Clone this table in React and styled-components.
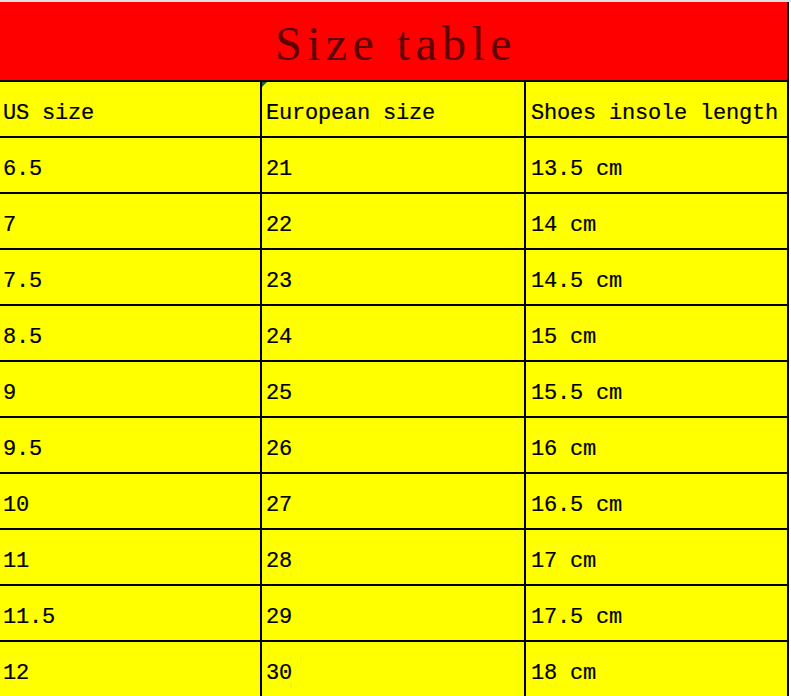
import React from "react"
import styled, { createGlobalStyle } from "styled-components"

const rows = [
  ["6.5", "21", "13.5 cm"],
  ["7", "22", "14 cm"],
  ["7.5", "23", "14.5 cm"],
  ["8.5", "24", "15 cm"],
  ["9", "25", "15.5 cm"],
  ["9.5", "26", "16 cm"],
  ["10", "27", "16.5 cm"],
  ["11", "28", "17 cm"],
  ["11.5", "29", "17.5 cm"],
  ["12", "30", "18 cm"],
]

const GlobalStyle = createGlobalStyle`
  html, body {
    margin: 0;
    padding: 0;
    background: #fff;
    overflow: hidden;
  }
`

const Page = styled.div`
  width: 791px;
  height: 696px;
  overflow: hidden;
  background: #fff;
  border-top: 2px solid #e2e2e2;
  box-sizing: border-box;
`

const Sheet = styled.div`
  width: 789px;
  display: grid;
  grid-template-columns: 260px 262px 261px;
  grid-template-rows: 78px repeat(11, 54px);
  gap: 2px;
  background: #000;
  padding-right: 2px;
  box-sizing: border-box;
`

const Title = styled.div`
  grid-column: 1 / -1;
  background: #ff0000;
  color: #5c0000;
  display: flex;
  align-items: center;
  justify-content: center;
  padding: 4px 0 0 5px;
  box-sizing: border-box;
  font-family: "Liberation Serif", "Times New Roman", serif;
  font-size: 48px;
  letter-spacing: 5.4px;
  white-space: nowrap;
`

const Cell = styled.div`
  position: relative;
  background: #ffff00;
  color: #000;
  display: flex;
  align-items: center;
  padding: 9px 0 0 ${p => p.$pad}px;
  box-sizing: border-box;
  font-family: "Liberation Mono", "Courier New", monospace;
  font-size: 22px;
  letter-spacing: -0.2px;
  -webkit-text-stroke: 0.2px #000;
  white-space: nowrap;
`

const CommentMark = styled.span`
  position: absolute;
  top: 0;
  left: 0;
  width: 0;
  height: 0;
  border-top: 5px solid #2c5f2c;
  border-right: 5px solid transparent;
`

const pads = [3, 4, 5]

export default function App() {
  return (
    <Page>
      <GlobalStyle />
      <Sheet>
        <Title>Size table</Title>
        <Cell $pad={pads[0]}>US size</Cell>
        <Cell $pad={pads[1]}>
          <CommentMark />
          European size
        </Cell>
        <Cell $pad={pads[2]}>Shoes insole length</Cell>
        {rows.map(r =>
          r.map((v, i) => (
            <Cell key={r[0] + i} $pad={pads[i]}>
              {v}
            </Cell>
          ))
        )}
      </Sheet>
    </Page>
  )
}
